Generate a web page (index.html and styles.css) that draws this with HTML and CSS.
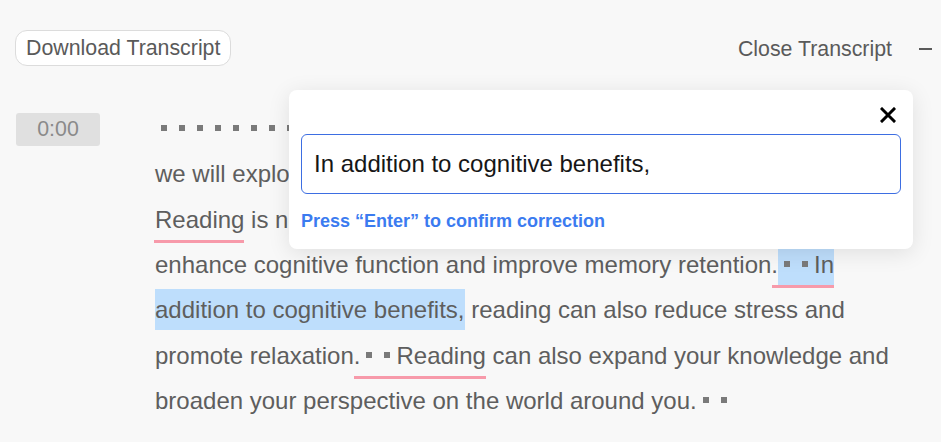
FILE: index.html
```html
<!DOCTYPE html>
<html lang="en">
<head>
<meta charset="utf-8">
<title>Transcript</title>
<link rel="stylesheet" href="styles.css">
</head>
<body>
<div class="page">
  <header class="bar">
    <button class="download" type="button">Download Transcript</button>
    <div class="close">
      <span class="close-label">Close Transcript</span>
      <span class="minus"></span>
    </div>
  </header>

  <section class="segment">
    <div class="time">0:00</div>
    <p class="text"><i class="p"></i><i class="p"></i><i class="p"></i><i class="p"></i><i class="p"></i><i class="p"></i><i class="p"></i><i class="p"></i><i class="p"></i><i class="p"></i><i class="p"></i><i class="p"></i><i class="p"></i><i class="p"></i><i class="p"></i><i class="p"></i><i class="p"></i><i class="p"></i><i class="p"></i><i class="p"></i><i class="p"></i><i class="p"></i><i class="p"></i><i class="p"></i><i class="p"></i><i class="p"></i><i class="p"></i><i class="p"></i><i class="p"></i><i class="p"></i><i class="p"></i><i class="p"></i><i class="p"></i><i class="p"></i><i class="p"></i><i class="p"></i><i class="p"></i><i class="p"></i><i class="p"></i><i class="p"></i><i class="p"></i> we will explore the benefits of reading and how it can improve lives. <span class="ul ul-word">Reading</span> is not only a relaxing hobby, but it has also been shown to enhance cognitive function and improve memory retention.<span class="ul ul-pause"><span class="hl"><i class="p"></i><i class="p"></i>In</span></span><span class="hl"> addition to cognitive benefits,</span> reading can also reduce stress and promote relaxation.<span class="ul ul-pause"><i class="p"></i><i class="p"></i>Reading</span> can also expand your knowledge and broaden your perspective on the world around you.<i class="p"></i><i class="p"></i></p>
  </section>

  <div class="editor">
    <div class="editor-top">
      <svg class="x" width="16" height="16" viewBox="0 0 16 16" aria-label="Close">
        <path d="M2 2 L14 14 M14 2 L2 14" stroke="#000" stroke-width="3" stroke-linecap="square" fill="none"/>
      </svg>
    </div>
    <input class="field" type="text" value="In addition to cognitive benefits,">
    <div class="hint">Press “Enter” to confirm correction</div>
  </div>
</div>
</body>
</html>
```

FILE: styles.css
```css
html, body {
  margin: 0;
  padding: 0;
  background: #f8f8f8;
}

body {
  font-family: "Liberation Sans", Arial, sans-serif;
  color: #5e5e5e;
}

.page {
  position: relative;
  height: 442px;
  padding: 30px 9px 0 15px;
  box-sizing: border-box;
  overflow: hidden;
}

.bar {
  display: flex;
  justify-content: space-between;
  align-items: center;
  height: 36px;
}

.download {
  height: 36px;
  box-sizing: border-box;
  padding: 0 10px;
  border: 1px solid #dcdcdc;
  border-radius: 12px;
  background: #ffffff;
  color: #5a5a5a;
  font-family: "Liberation Sans", Arial, sans-serif;
  font-size: 21.33px;
  line-height: 24px;
  margin: 0;
}

.close {
  display: flex;
  align-items: center;
  gap: 27px;
  padding-top: 2px;
}

.close-label {
  font-size: 21.33px;
  color: #5a5a5a;
}

.minus {
  display: block;
  width: 13px;
  height: 2px;
  background: #5a5a5a;
}

.segment {
  display: grid;
  grid-template-columns: 140px 750px;
  margin-top: 40px;
}

.time {
  width: 84px;
  height: 33px;
  margin: 7px 0 0 1px;
  border-radius: 3px;
  background: #e0e0e0;
  color: #8a8a8a;
  font-size: 21.33px;
  line-height: 33px;
  text-align: center;
}

.text {
  margin: 0;
  font-size: 24px;
  line-height: 45.33px;
  color: #5e5e5e;
}

.p {
  display: inline-block;
  width: 6px;
  height: 6px;
  margin: 0 6px;
  background: #7a7a7a;
  vertical-align: 6px;
}

.ul {
  padding-bottom: 10px;
  background: linear-gradient(#f79aaa, #f79aaa) left bottom / 100% 3px no-repeat;
}

.ul-word {
  padding-left: 1px;
  margin-left: -1px;
}

.ul-pause {
  padding-left: 6px;
  margin-left: -6px;
}

.hl {
  background: #bedefc;
  padding: 7px 0;
}

.editor {
  position: absolute;
  left: 289px;
  top: 90px;
  width: 624px;
  height: 159px;
  box-sizing: border-box;
  padding: 12px 12px 0 12px;
  background: #ffffff;
  border-radius: 8px;
  box-shadow: 0 4px 22px rgba(0, 0, 0, 0.10);
  display: flex;
  flex-direction: column;
}

.editor-top {
  height: 32px;
  display: flex;
  justify-content: flex-end;
  align-items: flex-start;
}

.x {
  display: block;
  margin: 5px 5px 0 0;
}

.field {
  display: block;
  width: 600px;
  height: 60px;
  box-sizing: border-box;
  margin: 0;
  padding: 0 12px;
  border: 1px solid #3d6ee2;
  border-radius: 6px;
  background: #ffffff;
  color: #161616;
  font-family: "Liberation Sans", Arial, sans-serif;
  font-size: 24px;
  outline: none;
}

.hint {
  margin-top: 16px;
  font-size: 18px;
  line-height: 22px;
  font-weight: bold;
  color: #3b7bf0;
}
```
